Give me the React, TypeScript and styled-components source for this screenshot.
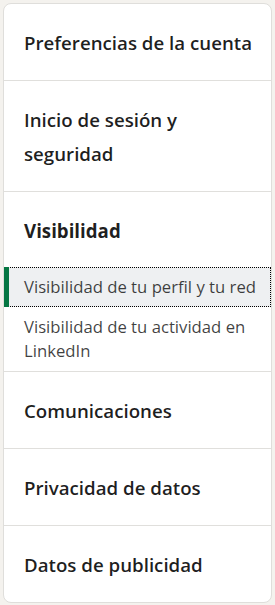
import React, { useState } from "react";
import styled, { createGlobalStyle } from "styled-components";

const GlobalStyle = createGlobalStyle`
  html, body {
    margin: 0;
    padding: 0;
    background: #f4f2ee;
  }
  body {
    font-family: "Open Sans", "Liberation Sans", sans-serif;
    -webkit-font-smoothing: antialiased;
  }
`;

const Page = styled.div`
  padding: 3px;
  width: 275px;
  box-sizing: border-box;
`;

const Card = styled.nav`
  background: #ffffff;
  border: 1px solid #dfdedb;
  border-radius: 8px;
  overflow: hidden;
`;

const Section = styled.div`
  border-top: 1px solid #e0dfdc;
  padding: 22px 0 20px;

  &:first-child {
    border-top: none;
  }
`;

const GroupSection = styled(Section)`
  padding-bottom: 0;
`;

const Heading = styled.a<{ $bold?: boolean }>`
  display: block;
  padding: 0 10px 0 20px;
  font-size: 18.7px;
  line-height: 34px;
  font-weight: ${(p) => (p.$bold ? 700 : 600)};
  color: rgba(0, 0, 0, 0.88);
  text-decoration: none;
`;

const SubList = styled.ul`
  list-style: none;
  margin: 19px 0 0;
  padding: 0;
`;

const SubItem = styled.li<{ $active?: boolean }>`
  position: relative;
  padding: 8px 10px 8px 20px;
  font-size: 16.7px;
  line-height: 24px;
  color: rgba(0, 0, 0, 0.75);
  background: ${(p) => (p.$active ? "#eef0f2" : "transparent")};
  outline: ${(p) => (p.$active ? "1px dotted #000" : "none")};
  outline-offset: -1px;
  cursor: pointer;

  &::before {
    content: "";
    display: ${(p) => (p.$active ? "block" : "none")};
    position: absolute;
    left: 0;
    top: 0;
    bottom: 0;
    width: 5px;
    background: #057642;
  }
`;

const sections = [
  { title: "Preferencias de la cuenta" },
  { title: "Inicio de sesión y seguridad" },
  {
    title: "Visibilidad",
    bold: true,
    items: [
      "Visibilidad de tu perfil y tu red",
      "Visibilidad de tu actividad en LinkedIn",
    ],
  },
  { title: "Comunicaciones" },
  { title: "Privacidad de datos" },
  { title: "Datos de publicidad" },
];

const App = () => {
  const [active, setActive] = useState("Visibilidad de tu perfil y tu red");

  return (
    <>
      <GlobalStyle />
      <Page>
        <Card>
          {sections.map((s) =>
            s.items ? (
              <GroupSection key={s.title}>
                <Heading $bold={s.bold}>{s.title}</Heading>
                <SubList>
                  {s.items.map((item) => (
                    <SubItem
                      key={item}
                      $active={active === item}
                      onClick={() => setActive(item)}
                    >
                      {item}
                    </SubItem>
                  ))}
                </SubList>
              </GroupSection>
            ) : (
              <Section key={s.title}>
                <Heading>{s.title}</Heading>
              </Section>
            )
          )}
        </Card>
      </Page>
    </>
  );
};

export default App;
